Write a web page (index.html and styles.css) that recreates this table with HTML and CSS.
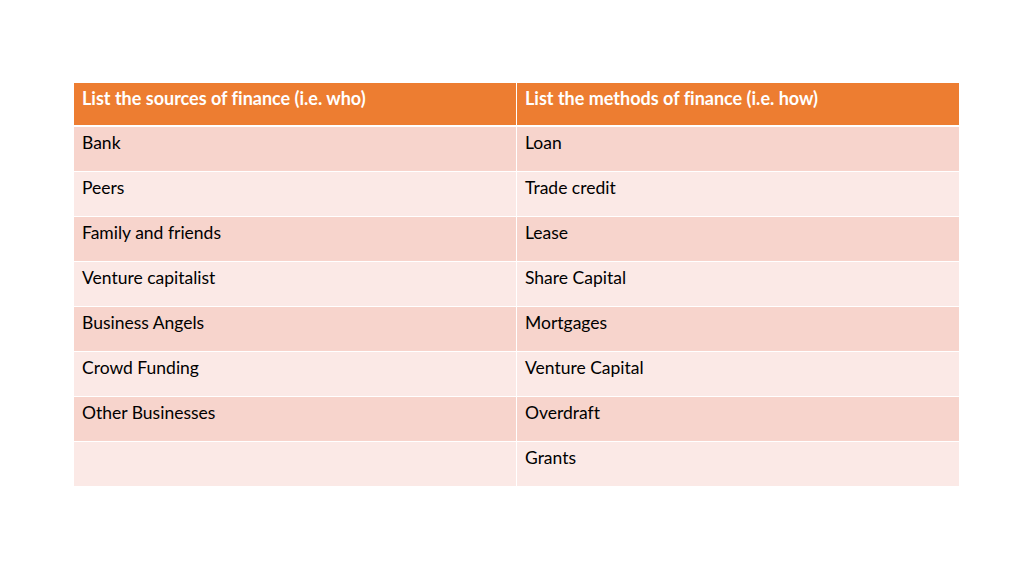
FILE: index.html
```html
<!DOCTYPE html>
<html>
<head>
<meta charset="utf-8">
<link rel="stylesheet" href="styles.css">
</head>
<body>
<div class="slide">
  <div class="table">
    <div class="cell head">List the sources of finance (i.e. who)</div>
    <div class="cell head">List the methods of finance (i.e. how)</div>
    <div class="cell dark">Bank</div>
    <div class="cell dark">Loan</div>
    <div class="cell light">Peers</div>
    <div class="cell light">Trade credit</div>
    <div class="cell dark">Family and friends</div>
    <div class="cell dark">Lease</div>
    <div class="cell light">Venture capitalist</div>
    <div class="cell light">Share Capital</div>
    <div class="cell dark">Business Angels</div>
    <div class="cell dark">Mortgages</div>
    <div class="cell light">Crowd Funding</div>
    <div class="cell light">Venture Capital</div>
    <div class="cell dark">Other Businesses</div>
    <div class="cell dark">Overdraft</div>
    <div class="cell light"></div>
    <div class="cell light">Grants</div>
  </div>
</div>
</body>
</html>
```

FILE: styles.css
```css
html, body {
  margin: 0;
  padding: 0;
  background: #ffffff;
}
.slide {
  width: 1024px;
  height: 576px;
  box-sizing: border-box;
  padding: 83px 0 0 74px;
  font-family: Lato, "Open Sans", sans-serif;
}
.table {
  width: 885px;
  display: grid;
  grid-template-columns: 1fr 1fr;
  grid-template-rows: 43px;
  grid-auto-rows: 44px;
  column-gap: 1px;
  row-gap: 1px;
}
.cell {
  box-sizing: border-box;
  padding: 5px 8px 0 8px;
  font-size: 17.5px;
  line-height: 22px;
  color: #000;
  font-variant-ligatures: none;
}
.head {
  background: #ed7d31;
  color: #fff;
  font-weight: bold;
  font-size: 18px;
  margin-bottom: 1px;
  padding-top: 4px;
}
.dark {
  background: #f7d4cc;
}
.light {
  background: #fbe9e6;
}
```
